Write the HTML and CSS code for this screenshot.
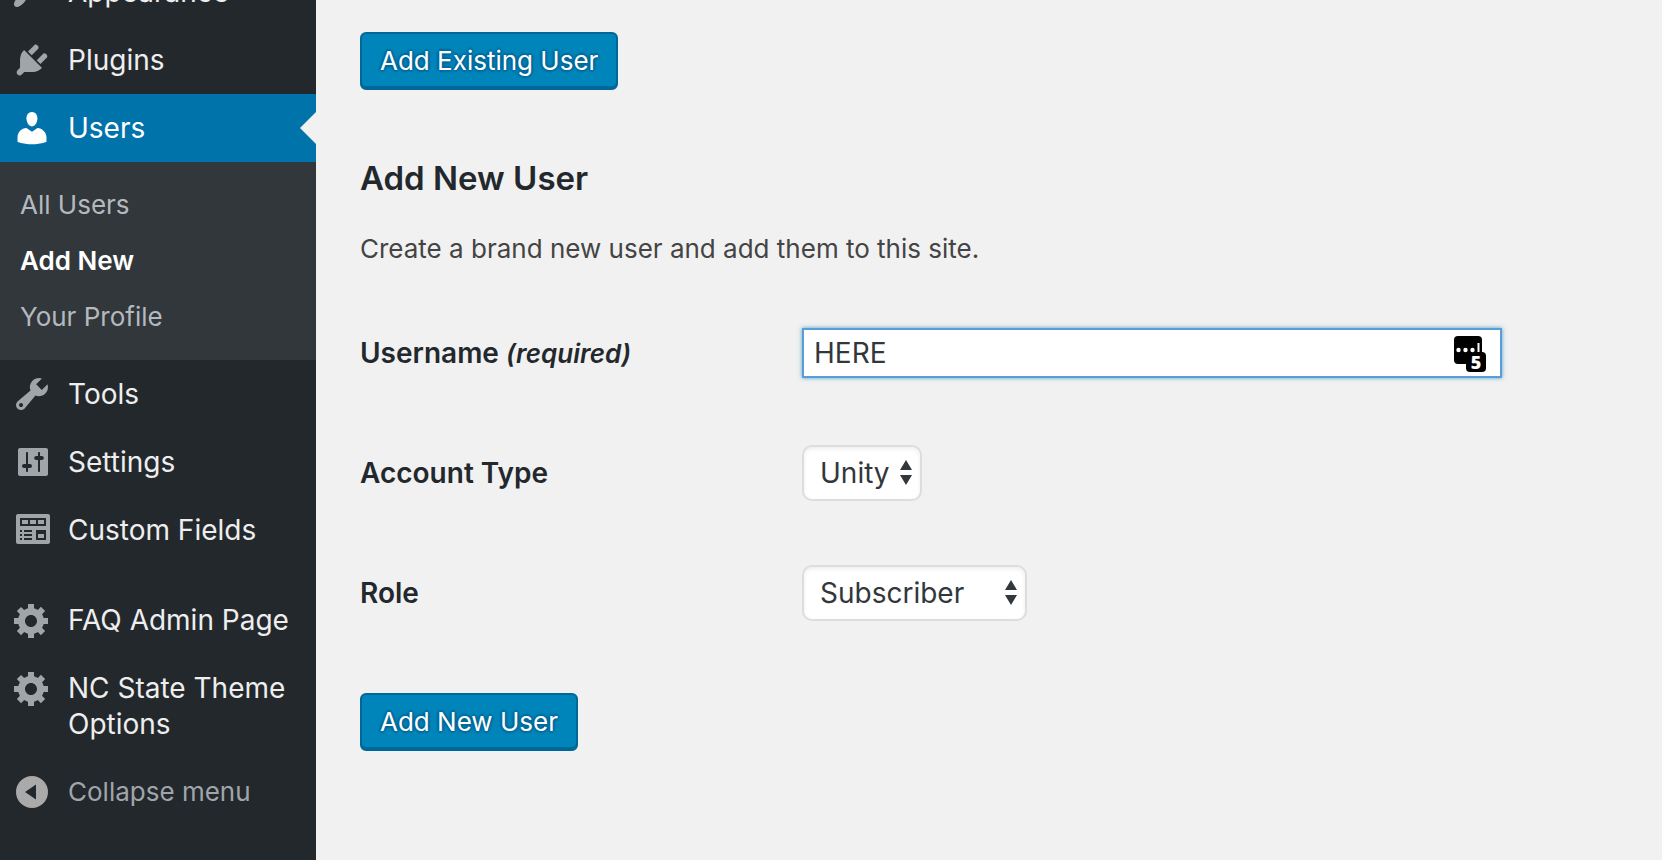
FILE: index.html
```html
<!DOCTYPE html>
<html lang="en">
<head>
<meta charset="utf-8">
<title>Add New User</title>
<link rel="stylesheet" href="styles.css">
</head>
<body>
<div class="layout">
  <nav class="sidebar" aria-label="Main menu">
    <ul class="menu">
      <li><a class="menu-link" href="#appearance">
        <svg class="icon" viewBox="0 0 20 20"><path d="M14.48 11.06L7.41 3.99l1.5-1.5c.5-.56 2.3-.47 3.51.32 1.21.8 1.43 1.28 2.91 2.1 1.18.64 2.45 1.26 4.45.85zm-.71.71L6.7 4.7 4.93 6.47c-.39.39-.39 1.02 0 1.41l1.06 1.06c.39.39.39 1.03 0 1.42-.6.6-1.43 1.11-2.21 1.69-.35.26-.7.53-1.01.84C1.43 14.23.4 16.08 1.4 17.07c.99 1 2.84-.03 4.18-1.36.31-.31.58-.66.85-1.02.57-.78 1.08-1.61 1.69-2.21.39-.39 1.02-.39 1.41 0l1.06 1.06c.39.39 1.02.39 1.41 0z"/></svg>
        <span>Appearance</span></a></li>
      <li><a class="menu-link" href="#plugins">
        <svg class="icon" viewBox="0 0 20 20"><path d="M13.11 4.36L9.87 7.6 8 5.73l3.24-3.24c.35-.34 1.05-.2 1.56.32.52.51.66 1.21.31 1.55zm-8 1.77l.91-1.12 9.01 9.01-1.19.84c-.71.71-2.63 1.16-3.82 1.16H6.14L4.9 17.26c-.59.59-1.54.59-2.12 0-.59-.58-.59-1.53 0-2.12l1.24-1.24v-3.88c0-1.13.4-3.19 1.09-3.89zm7.26 3.97l3.24-3.24c.34-.35 1.04-.21 1.55.31.52.51.66 1.21.31 1.55l-3.24 3.25z"/></svg>
        <span>Plugins</span></a></li>
      <li><a class="menu-link current" href="#users" aria-current="true">
        <svg class="icon" viewBox="0 0 20 20"><path d="M10 9.25c-2.27 0-2.73-3.44-2.73-3.44C7 4.02 7.82 2 9.97 2c2.16 0 2.98 2.02 2.71 3.81 0 0-.41 3.44-2.68 3.44zm0 2.57L12.72 10c2.39 0 4.52 2.33 4.52 4.53v2.49s-3.65 1.13-7.24 1.13c-3.65 0-7.24-1.13-7.24-1.13v-2.49c0-2.25 1.94-4.48 4.47-4.48z"/></svg>
        <span>Users</span></a>
        <ul class="submenu">
          <li><a class="submenu-link" href="#all">All Users</a></li>
          <li><a class="submenu-link active" href="#new" aria-current="page">Add New</a></li>
          <li><a class="submenu-link" href="#profile">Your Profile</a></li>
        </ul></li>
      <li><a class="menu-link" href="#tools">
        <svg class="icon" viewBox="0 0 20 20"><path d="M16.68 9.77c-1.34 1.34-3.3 1.67-4.95.99l-5.41 6.52c-.99.99-2.59.99-3.58 0s-.99-2.59 0-3.57l6.52-5.42c-.68-1.65-.35-3.61.99-4.95 1.28-1.28 3.12-1.62 4.72-1.06l-2.89 2.89 2.82 2.82 2.86-2.87c.53 1.58.18 3.39-1.08 4.65zM3.81 16.21c.4.39 1.04.39 1.43 0 .4-.4.4-1.04 0-1.43-.39-.4-1.03-.4-1.43 0-.39.39-.39 1.03 0 1.43z"/></svg>
        <span>Tools</span></a></li>
      <li><a class="menu-link" href="#settings">
        <svg class="icon" viewBox="0 0 20 20"><path d="M18 16V4c0-.55-.45-1-1-1H4c-.55 0-1 .45-1 1v12c0 .55.45 1 1 1h13c.55 0 1-.45 1-1zM8 11h1c.55 0 1 .45 1 1s-.45 1-1 1H8v1.5c0 .28-.22.5-.5.5s-.5-.22-.5-.5V13H6c-.55 0-1-.45-1-1s.45-1 1-1h1V5.500c0-.28.22-.5.5-.5s.5.22.5.5V11zm5-2h-.9c-.55 0-1-.45-1-1s.45-1 1-1h.9V5.500c0-.28.22-.5.5-.5s.5.22.5.5V7h.9c.55 0 1 .45 1 1s-.45 1-1 1h-.9v5.500c0 .28-.22.5-.5.5s-.5-.22-.5-.5V9z"/></svg>
        <span>Settings</span></a></li>
      <li><a class="menu-link" href="#fields">
        <svg class="icon" viewBox="0 0 20 20"><path fill-rule="evenodd" d="M3 2h15c.55 0 1 .45 1 1v13c0 .55-.45 1-1 1H3c-.55 0-1-.45-1-1V3c0-.55.45-1 1-1zM4 4v4h13V4zM4 10v1h1v-1zM6 10v1h4v-1zM4 12v1h1v-1zM6 12v1h4v-1zM4 14v1h1v-1zM6 14v1h4v-1zM12 10v5h5v-5z"/><path d="M5 5h3v2H5zM9 5h3v2H9zM13 5h3v2h-3zM13 12h3v2h-3z"/></svg>
        <span>Custom Fields</span></a></li>
      <li class="group-start"><a class="menu-link" href="#faq">
        <svg class="icon" viewBox="0 0 20 20"><path d="M18 12h-2.180c-.17.7-.44 1.350-.81 1.930l1.540 1.540-2.100 2.100-1.540-1.540c-.58.36-1.230.63-1.910.79V19H8v-2.180c-.68-.16-1.330-.43-1.910-.79l-1.540 1.540-2.120-2.120 1.540-1.540c-.36-.58-.63-1.230-.79-1.910H1V9.030h2.170c.16-.7.44-1.350.8-1.940L2.430 5.550l2.100-2.100 1.540 1.540c.58-.37 1.240-.64 1.930-.81V2h3v2.180c.68.16 1.330.43 1.910.79l1.540-1.540 2.120 2.120-1.540 1.540c.36.59.64 1.240.8 1.940H18V12zm-8.500 1.500c1.660 0 3-1.340 3-3s-1.340-3-3-3-3 1.340-3 3 1.340 3 3 3z"/></svg>
        <span>FAQ Admin Page</span></a></li>
      <li><a class="menu-link" href="#theme">
        <svg class="icon" viewBox="0 0 20 20"><path d="M18 12h-2.180c-.17.7-.44 1.350-.81 1.930l1.540 1.540-2.100 2.100-1.540-1.540c-.58.36-1.230.63-1.910.79V19H8v-2.180c-.68-.16-1.330-.43-1.910-.79l-1.540 1.540-2.120-2.120 1.540-1.540c-.36-.58-.63-1.230-.79-1.910H1V9.030h2.170c.16-.7.44-1.350.8-1.940L2.430 5.550l2.100-2.100 1.540 1.540c.58-.37 1.240-.64 1.930-.81V2h3v2.180c.68.16 1.330.43 1.910.79l1.540-1.540 2.120 2.120-1.540 1.540c.36.59.64 1.240.8 1.940H18V12zm-8.500 1.500c1.660 0 3-1.340 3-3s-1.340-3-3-3-3 1.340-3 3 1.340 3 3 3z"/></svg>
        <span>NC State Theme Options</span></a></li>
      <li><button class="menu-link collapse" type="button">
        <svg class="icon" viewBox="0 0 20 20"><path fill-rule="evenodd" d="M10 2a8 8 0 1 0 0 16 8 8 0 0 0 0-16zM12 6.300v7.400L6.500 10z"/></svg>
        <span>Collapse menu</span></button></li>
    </ul>
  </nav>

  <main class="content">
    <button class="button" type="button">Add Existing User</button>
    <h2 class="heading">Add New User</h2>
    <p class="intro">Create a brand new user and add them to this site.</p>
    <form>
      <table class="form-table">
        <tr>
          <th scope="row"><label for="username">Username <em class="required">(required)</em></label></th>
          <td><div class="text-field">
            <input class="text-input" id="username" type="text" value="HERE">
            <span class="password-tool">
              <svg class="password-icon" viewBox="0 0 32 36"><rect width="28" height="28" rx="4"/><rect x="12" y="16" width="20" height="20" rx="4"/><g fill="#fff"><circle cx="4.500" cy="14" r="2.200"/><circle cx="11.500" cy="14" r="2.200"/><circle cx="18.500" cy="14" r="2.200"/><rect x="23.500" y="7" width="2" height="9"/></g></svg>
              <span class="password-count">5</span>
            </span>
          </div></td>
        </tr>
        <tr>
          <th scope="row"><label for="account">Account Type</label></th>
          <td><div class="select-field">
            <select class="select" id="account"><option>Unity</option></select>
            <svg class="select-arrows" viewBox="0 0 12 26"><path d="M6 0l6 10H0zM0 15h12L6 25z"/></svg>
          </div></td>
        </tr>
        <tr>
          <th scope="row"><label for="role">Role</label></th>
          <td><div class="select-field">
            <select class="select role" id="role"><option>Subscriber</option></select>
            <svg class="select-arrows" viewBox="0 0 12 26"><path d="M6 0l6 10H0zM0 15h12L6 25z"/></svg>
          </div></td>
        </tr>
      </table>
      <button class="button" type="submit">Add New User</button>
    </form>
  </main>
</div>
</body>
</html>
```

FILE: styles.css
```css
* {
  box-sizing: border-box;
}

body {
  margin: 0;
  background: #f1f1f1;
  color: #444;
  font-family: Inter, "Liberation Sans", sans-serif;
  font-size: 26px;
}

.layout {
  display: flex;
  height: 100vh;
  overflow: hidden;
}

/* Sidebar */
.sidebar {
  flex: none;
  width: 316px;
  background: #23282d;
}

.menu,
.submenu {
  margin: 0;
  padding: 0;
  list-style: none;
}

/* The menu is scrolled part of the way down. */
.menu {
  margin-top: -42px;
}

.menu-link {
  position: relative;
  display: flex;
  align-items: flex-start;
  gap: 16px;
  width: 100%;
  padding: 16px 12px;
  border: 0;
  background: none;
  color: #eee;
  font: inherit;
  font-size: 28px;
  line-height: 36px;
  text-align: left;
  text-decoration: none;
}

.icon {
  flex: none;
  width: 40px;
  height: 40px;
  margin: -2px 0;
  fill: #a0a5aa;
}

.menu-link.current {
  background: #0073aa;
  color: #fff;
}

.current .icon {
  fill: #fff;
}

.current::after {
  content: "";
  position: absolute;
  top: 18px;
  right: 0;
  border: 16px solid transparent;
  border-right-color: #f1f1f1;
  border-left-width: 0;
}

.submenu {
  padding: 15px 0;
  background: #32373c;
}

.submenu-link {
  display: block;
  padding: 10px 20px;
  color: #b4b9be;
  line-height: 36px;
  text-decoration: none;
}

.submenu-link.active {
  color: #fff;
  font-weight: 600;
}

.group-start {
  margin-top: 22px;
}

.menu-link.collapse {
  color: #a0a5aa;
  font-size: 26px;
}

.collapse .icon {
  fill: #aaa;
}

/* Content */
.content {
  flex: 1;
  min-width: 0;
  padding: 32px 44px;
}

.button {
  display: block;
  height: 58px;
  padding: 0 18px 2px;
  border: 2px solid #006799;
  border-radius: 6px;
  background: #0085ba;
  box-shadow: inset 0 -2px 0 #006799;
  color: #fff;
  font: inherit;
  text-shadow: 0 -2px 2px #006799, 2px 0 2px #006799, 0 2px 2px #006799, -2px 0 2px #006799;
}

.heading {
  margin: 64px 0 0;
  color: #23282d;
  font-size: 33px;
  font-weight: 600;
  line-height: 48px;
}

.intro {
  margin: 27px 0 24px;
  line-height: 40px;
}

.form-table {
  width: 100%;
  margin-bottom: 40px;
  border-collapse: collapse;
  font-size: 28px;
}

.form-table tr {
  height: 120px;
}

.form-table th {
  width: 442px;
  padding: 0;
  color: #23282d;
  font-weight: 600;
  text-align: left;
}

.form-table td {
  padding: 0;
}

.required {
  font-size: 26px;
}

.text-field {
  position: relative;
  max-width: 700px;
}

.text-input {
  display: block;
  width: 100%;
  height: 50px;
  padding: 0 60px 0 10px;
  border: 2px solid #5b9dd9;
  outline: 0;
  background: #fff;
  box-shadow: 0 0 4px rgba(30, 140, 190, 0.8);
  color: #32373c;
  font: inherit;
}

.password-tool {
  position: absolute;
  top: 8px;
  right: 16px;
  width: 32px;
  height: 36px;
}

.password-icon {
  display: block;
}

.password-count {
  position: absolute;
  right: 0;
  bottom: 0;
  width: 20px;
  color: #fff;
  font-family: "Open Sans", sans-serif;
  font-size: 18px;
  font-weight: 800;
  line-height: 20px;
  text-align: center;
}

.select-field {
  position: relative;
  width: max-content;
}

.select {
  display: block;
  height: 56px;
  padding: 0 30px 0 16px;
  border: 2px solid #ddd;
  border-radius: 10px;
  appearance: none;
  background: #fff;
  box-shadow: inset 0 2px 4px rgba(0, 0, 0, 0.07);
  color: #32373c;
  font: inherit;
}

.select.role {
  padding-right: 60px;
}

.select-arrows {
  position: absolute;
  top: 15px;
  right: 10px;
  width: 12px;
  height: 26px;
  fill: #32373c;
  pointer-events: none;
}
```
